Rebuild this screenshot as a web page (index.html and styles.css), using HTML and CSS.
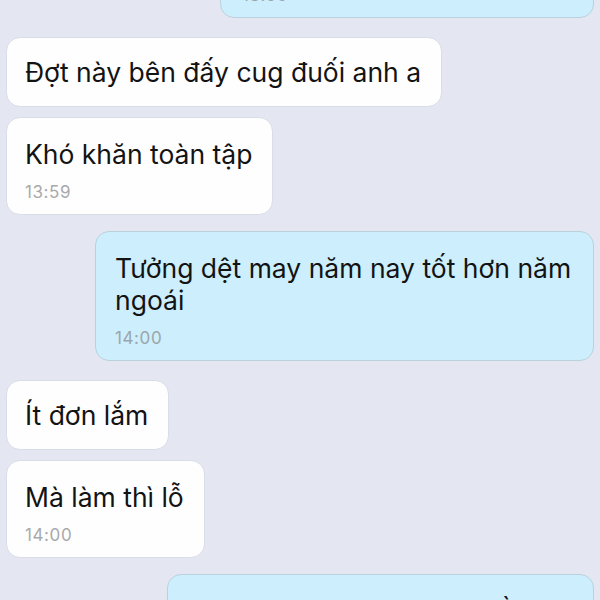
FILE: index.html
```html
<!DOCTYPE html>
<html lang="vi">
<head>
<meta charset="utf-8">
<link rel="stylesheet" href="styles.css">
</head>
<body>
<div class="chat">
  <div class="msg sent first">
    <div class="text">Bên em dạo này sao</div>
    <div class="time">13:59</div>
  </div>
  <div class="msg recv">
    <div class="text">Đợt này bên đấy cug đuối anh a</div>
  </div>
  <div class="msg recv tight timed">
    <div class="text">Khó khăn toàn tập</div>
    <div class="time">13:59</div>
  </div>
  <div class="msg sent timed">
    <div class="text">Tưởng dệt may năm nay tốt hơn năm ngoái</div>
    <div class="time">14:00</div>
  </div>
  <div class="msg recv">
    <div class="text">Ít đơn lắm</div>
  </div>
  <div class="msg recv tight timed">
    <div class="text">Mà làm thì lỗ</div>
    <div class="time">14:00</div>
  </div>
  <div class="msg sent timed last">
    <div class="text">Vậy thì khó khăn chung rồi, năm sau chắc cũng vậy</div>
    <div class="time">14:01</div>
  </div>
</div>
</body>
</html>
```
FILE: styles.css
```css
html, body {
  margin: 0;
  padding: 0;
  background: #e4e7f1;
  height: 600px;
  overflow: hidden;
}
.chat {
  display: flex;
  flex-direction: column;
  align-items: flex-start;
  padding: 0 6px;
  margin-top: -80px;
  font-family: Inter, "Noto Sans", sans-serif;
}
.msg {
  box-sizing: border-box;
  border-radius: 14px;
  max-width: 499px;
  padding: 18px 20px 18px 18px;
}
.recv {
  background: #fefeff;
  border: 1px solid #d9dde7;
  margin-top: 19px;
}
.recv.tight { margin-top: 10px; }
.sent {
  align-self: flex-end;
  background: #cdeefc;
  border: 1px solid #b9d2de;
  margin-top: 16px;
  padding-left: 19px;
}
.msg.timed { padding-top: 20px; padding-bottom: 12px; }
.msg.first { margin-top: 0; width: 374px; padding: 20px 20px 12px 21px; }
.msg.last { width: 427px; }
.text {
  font-size: 26.5px;
  line-height: 32px;
  color: #131313;
}
.time {
  font-size: 17px;
  line-height: 20px;
  letter-spacing: 0.6px;
  margin-top: 12px;
  color: #a9a9ab;
}
.sent .time { color: #9ba6ac; }
```
